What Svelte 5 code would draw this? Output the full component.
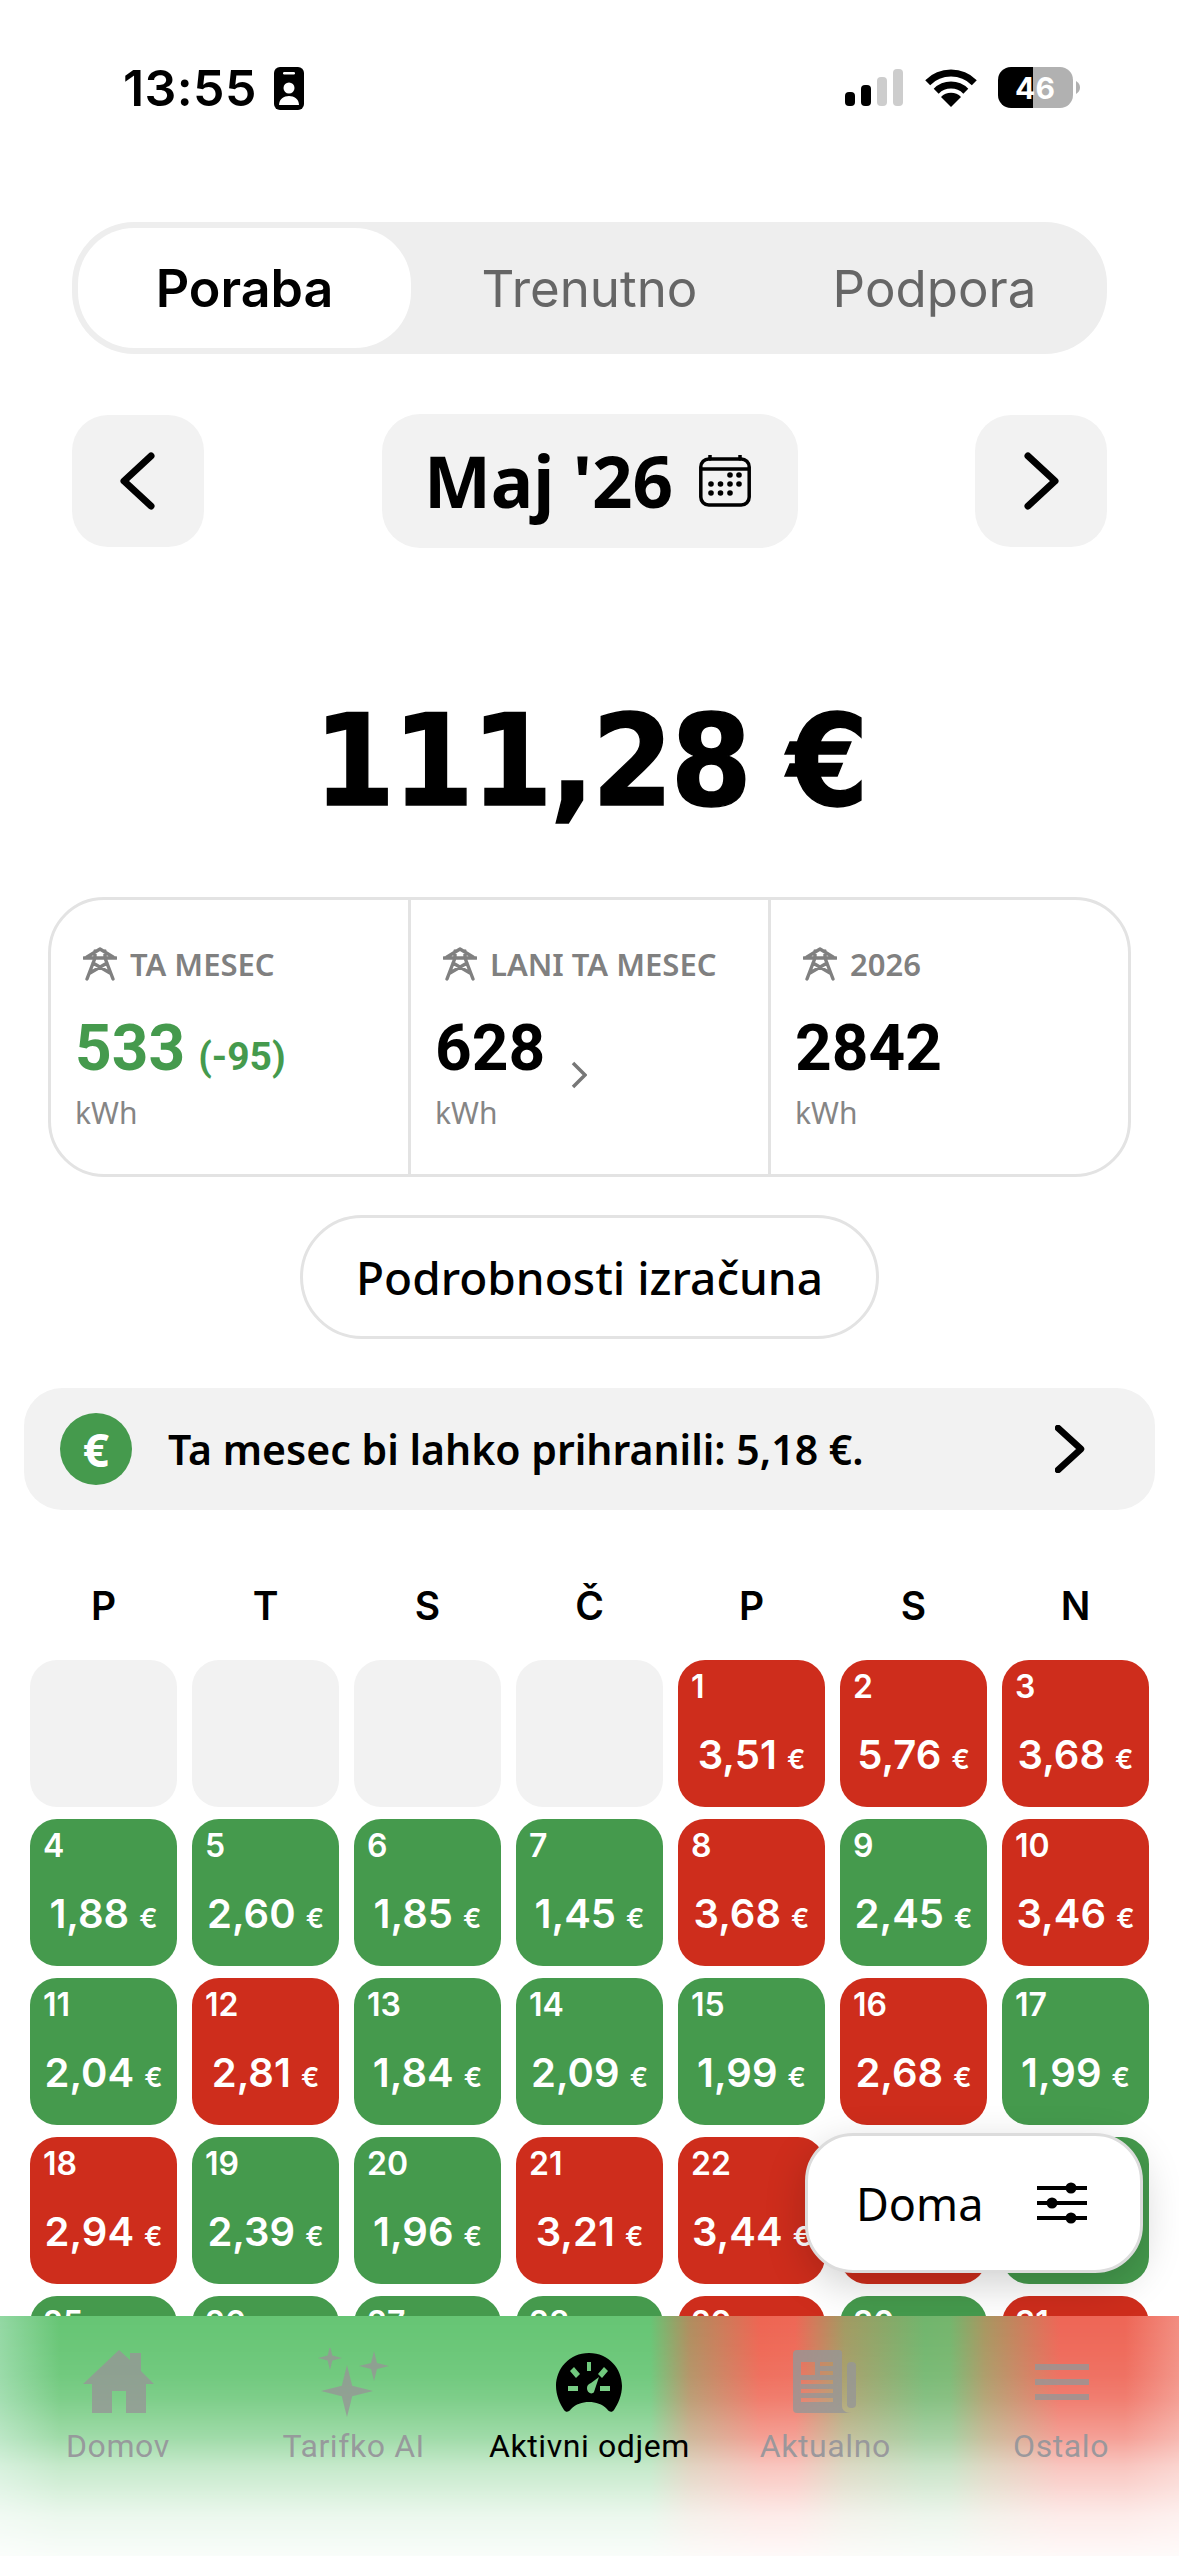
<script>
  const g = 'green', r = 'red';
  const cells = [
    null, null, null, null,
    [1,'3,51',r],[2,'5,76',r],[3,'3,68',r],
    [4,'1,88',g],[5,'2,60',g],[6,'1,85',g],[7,'1,45',g],[8,'3,68',r],[9,'2,45',g],[10,'3,46',r],
    [11,'2,04',g],[12,'2,81',r],[13,'1,84',g],[14,'2,09',g],[15,'1,99',g],[16,'2,68',r],[17,'1,99',g],
    [18,'2,94',r],[19,'2,39',g],[20,'1,96',g],[21,'3,21',r],[22,'3,44',r],['', '', r],['', '', g],
    [25,'',g],[26,'',g],[27,'',g],[28,'',g],[29,'',r],[30,'',g],[31,'',r]
  ];
  const days = ['P','T','S','Č','P','S','N'];
  const star = (cx, cy, s) => {
    const k = s * 0.2;
    return `M${cx} ${cy-s}L${cx+k} ${cy-k}L${cx+s} ${cy}L${cx+k} ${cy+k}L${cx} ${cy+s}L${cx-k} ${cy+k}L${cx-s} ${cy}L${cx-k} ${cy-k}Z`;
  };
</script>

{#snippet tower()}
  <svg class="tower" viewBox="0 0 34 34" fill="none" stroke="#808080" stroke-width="3.4" stroke-linecap="round" stroke-linejoin="round">
    <path d="M1 11H33M4 10L17 2L30 10M12 4V10M22 4V10M12 11L4 32M22 11L30 32M10 16L27 26M24 16L7 26"/>
  </svg>
{/snippet}

<div class="page">
  <div class="status">
    <div class="clock">
      <span class="time">13:55</span>
      <svg class="id" viewBox="0 0 30 43">
        <rect width="30" height="43" rx="6" fill="#000"/>
        <rect x="9" y="5" width="12" height="2.5" rx="1.2" fill="#fff"/>
        <circle cx="15" cy="21" r="5.5" fill="#fff"/>
        <path d="M5 38C5 32 10 29 15 29S25 32 25 38Z" fill="#fff"/>
      </svg>
    </div>
    <svg class="sys" viewBox="0 0 236 44">
      <rect x="0" y="26" width="10" height="14" rx="4" fill="#000"/>
      <rect x="16" y="19" width="10" height="21" rx="4" fill="#000"/>
      <rect x="32" y="11" width="10" height="29" rx="4" fill="#cdcdcd"/>
      <rect x="48" y="3" width="10" height="37" rx="4" fill="#cdcdcd"/>
      <path d="M82.7 16.7A33 33 0 0 1 129.3 16.7M91.2 25.2A21 21 0 0 1 120.8 25.2" fill="none" stroke="#000" stroke-width="7"/>
      <path d="M106 41L96 31A14 14 0 0 1 116 31Z" fill="#000"/>
      <path d="M188 1H166A13 13 0 0 0 153 14V29A13 13 0 0 0 166 42H188Z" fill="#000"/>
      <path d="M188 1H215A13 13 0 0 1 228 14V29A13 13 0 0 1 215 42H188Z" fill="#b1b1b1"/>
      <path d="M231 15C234 17 235 19 235 21.5S234 26 231 28Z" fill="#b1b1b1"/>
      <text class="batt" x="190" y="33" text-anchor="middle">46</text>
    </svg>
  </div>

  <div class="seg">
    <div class="seg-item active"><span>Poraba</span></div>
    <div class="seg-item">Trenutno</div>
    <div class="seg-item">Podpora</div>
  </div>

  <div class="nav">
    <div class="square">
      <svg viewBox="0 0 132 132" class="chev"><path d="M79 41L52 66L79 91"/></svg>
    </div>
    <div class="month">
      <span>Maj '26</span>
      <svg class="cal" viewBox="0 0 52 52" fill="none" stroke="#000" stroke-width="3.5">
        <rect x="1.8" y="4" width="48.4" height="46" rx="8"/>
        <path d="M2 14H50" />
        <path d="M11 0V4M41 0V4" stroke-linecap="round"/>
        <g fill="#000" stroke="none">
          <circle cx="31" cy="20" r="2.8"/><circle cx="40" cy="20" r="2.8"/>
          <circle cx="12" cy="29" r="2.8"/><circle cx="21.500" cy="29" r="2.8"/><circle cx="31" cy="29" r="2.8"/><circle cx="40" cy="29" r="2.8"/>
          <circle cx="12" cy="38" r="2.8"/><circle cx="21.500" cy="38" r="2.8"/><circle cx="31" cy="38" r="2.8"/>
        </g>
      </svg>
    </div>
    <div class="square">
      <svg viewBox="0 0 132 132" class="chev"><path d="M53 41L80 66L53 91"/></svg>
    </div>
  </div>

  <div class="total"><span>111,28 €</span></div>

  <div class="stats">
    <div class="stat">
      <div class="label">{@render tower()}<span>TA MESEC</span></div>
      <div class="val green-t">533<small>(-95)</small></div>
      <div class="unit">kWh</div>
    </div>
    <div class="stat">
      <div class="label">{@render tower()}<span>LANI TA MESEC</span></div>
      <div class="val">628</div>
      <div class="unit">kWh</div>
      <svg class="mini" viewBox="0 0 16 28"><path d="M2 2L14 14L2 26"/></svg>
    </div>
    <div class="stat">
      <div class="label">{@render tower()}<span>2026</span></div>
      <div class="val">2842</div>
      <div class="unit">kWh</div>
    </div>
  </div>

  <div class="detail">Podrobnosti izračuna</div>

  <div class="banner">
    <div class="coin">€</div>
    <div class="banner-text">Ta mesec bi lahko prihranili: 5,18 €.</div>
    <svg class="banner-chev" viewBox="0 0 30 48"><path d="M3 3L26 24L3 45"/></svg>
  </div>

  <div class="week">
    {#each days as d}<div>{d}</div>{/each}
  </div>

  <div class="grid">
    {#each cells as c}
      {#if c}
        <div class="cell {c[2]}">
          <div class="num">{c[0]}</div>
          {#if c[1]}<div class="amt">{c[1]} <small>€</small></div>{/if}
        </div>
      {:else}
        <div class="cell empty"></div>
      {/if}
    {/each}
  </div>

  <div class="float">
    <span>Doma</span>
    <svg class="sliders" viewBox="0 0 50 42">
      <path d="M0 6H50M0 21H50M0 36H50" stroke="#000" stroke-width="4"/>
      <circle cx="34" cy="6" r="5.500"/><circle cx="15" cy="21" r="5.500"/><circle cx="34" cy="36" r="5.500"/>
    </svg>
  </div>

  <div class="tabbar">
    <div class="tabglow"></div>
    <div class="tabs">
      <div class="tab">
        <svg viewBox="0 0 100 70"><path d="M51 2L62 12V5H73V23L86 36H78V65H58V43H44V65H24V36H15Z"/></svg>
        <span>Domov</span>
      </div>
      <div class="tab">
        <svg viewBox="0 0 100 70"><path d={star(43,43,26)}/><path d={star(26,10,12)}/><path d={star(70,18,15)}/></svg>
        <span>Tarifko AI</span>
      </div>
      <div class="tab on">
        <svg viewBox="0 0 100 70">
          <path fill-rule="evenodd" d="M50 5C70 5 83 21 83 38C83 47 79 56 75 62C73 65 70 64 68 61C63 56 57 54 50 54C43 54 37 56 32 61C30 64 27 65 25 62C21 56 17 47 17 38C17 21 30 5 50 5Z
            M48 14V23H52V14Z M29 38V43H39V38Z M61 38V43H71V38Z
            M35 19L31 23L37 30L41 26Z M65 19L69 23L63 30L59 26Z
            M60 29L55 44C53 47 48 45 48 40C48 37 50 36 52 35Z"/>
        </svg>
        <span>Aktivni odjem</span>
      </div>
      <div class="tab">
        <svg viewBox="0 0 100 70">
          <path fill-rule="evenodd" d="M22 2H64Q67 2 67 5V58C67 62 70 65 76 65H22Q18 65 18 61V6Q18 2 22 2Z
            M26 14V27H40V14Z M45 14V18H58V14Z M45 23V27H58V23Z M26 32V36H58V32Z M26 41V45H58V41Z M26 50V54H58V50Z"/>
          <rect x="72" y="14" width="9" height="46" rx="4"/>
        </svg>
        <span>Aktualno</span>
      </div>
      <div class="tab">
        <svg viewBox="0 0 100 70"><path d="M24 16H78V22H24ZM24 31H78V37H24ZM24 46H78V52H24Z"/></svg>
        <span>Ostalo</span>
      </div>
    </div>
  </div>
</div>

<style>
  :global(body) { margin: 0; background: #fff; }
  .page {
    position: relative;
    width: 1179px;
    height: 2556px;
    overflow: hidden;
    background: #fff;
    color: #000;
    font-family: Inter, "Liberation Sans", sans-serif;
  }
  .status {
    height: 222px;
    box-sizing: border-box;
    padding: 60px 98px 0 123px;
    display: flex;
    justify-content: space-between;
    align-items: flex-start;
  }
  .clock { display: flex; align-items: center; gap: 17px; }
  .time { font-size: 50px; font-weight: 600; line-height: 56px; letter-spacing: 0.4px; }
  .id { width: 30px; height: 43px; }
  .sys { width: 236px; height: 44px; margin-top: 6px; }
  .batt { font: 700 30px Inter, sans-serif; fill: #fff; }

  .seg {
    margin: 0 72px;
    height: 132px;
    background: #eeeeee;
    border-radius: 62px;
    display: grid;
    grid-template-columns: repeat(3, 1fr);
    align-items: center;
    text-align: center;
    font-size: 51px;
    color: #666;
  }
  .seg-item.active {
    height: 120px;
    margin: 0 6px;
    background: #fff;
    border-radius: 56px;
    color: #000;
    font-weight: 600;
    font-size: 52px;
    display: flex;
    align-items: center;
    justify-content: center;
  }

  .nav {
    margin-top: 60px;
    padding: 0 72px;
    display: flex;
    justify-content: space-between;
    align-items: center;
  }
  .square { width: 132px; height: 132px; background: #f2f2f2; border-radius: 36px; }
  .chev { display: block; width: 132px; height: 132px; fill: none; stroke: #000; stroke-width: 7; stroke-linecap: round; stroke-linejoin: round; }
  .month {
    width: 416px;
    height: 134px;
    background: #f2f2f2;
    border-radius: 38px;
    display: flex;
    align-items: center;
    justify-content: center;
    gap: 26px;
    padding-right: 4px;
    box-sizing: border-box;
    font-family: "Noto Sans", sans-serif;
    font-size: 71px;
    font-weight: 700;
    line-height: 130px;
  }
  .cal { width: 52px; height: 52px; }

  .total {
    margin-top: 139px;
    height: 150px;
    margin-bottom: -4px;
    display: flex;
    justify-content: center;
    align-items: center;
  }
  .total span {
    font-family: "DejaVu Sans", sans-serif;
    font-weight: 700;
    font-size: 126px;
    line-height: 150px;
    letter-spacing: -3px;
    white-space: nowrap;
    transform: scaleX(0.93);
    -webkit-text-stroke: 1.5px #000;
  }

  .stats {
    margin: 64px 48px 0;
    height: 280px;
    box-sizing: border-box;
    border: 3px solid #e3e3e3;
    border-radius: 56px;
    display: grid;
    grid-template-columns: 360px 360px 1fr;
  }
  .stat {
    position: relative;
    padding: 46px 0 0 24px;
    border-right: 3px solid #e3e3e3;
  }
  .stat:last-child { border-right: 0; }
  .label {
    display: flex;
    align-items: center;
    gap: 13px;
    padding-left: 8px;
    height: 36px;
    font-family: "Noto Sans", sans-serif;
    font-size: 31px;
    font-weight: 600;
    color: #808080;
  }
  .tower { width: 34px; height: 34px; flex: none; }
  .val {
    margin-top: 31px;
    height: 72px;
    line-height: 72px;
    font-family: Roboto, sans-serif;
    font-size: 64px;
    font-weight: 700;
  }
  .val small { font-size: 39px; font-weight: 700; margin-left: 13px; }
  .green-t { color: #459a4d; }
  .unit {
    margin-top: 9px;
    font-family: "Noto Sans", sans-serif;
    font-size: 30px;
    line-height: 38px;
    color: #858585;
  }
  .mini {
    position: absolute;
    left: 160px;
    top: 161px;
    width: 16px;
    height: 28px;
    fill: none;
    stroke: #777;
    stroke-width: 3.500;
  }

  .detail {
    margin: 38px auto 0;
    width: 579px;
    height: 124px;
    box-sizing: border-box;
    border: 3px solid #e3e3e3;
    border-radius: 62px;
    display: flex;
    align-items: center;
    justify-content: center;
    font-family: "Noto Sans", sans-serif;
    font-size: 46px;
    font-weight: 500;
  }

  .banner {
    margin: 49px 24px 0;
    height: 122px;
    background: #f2f2f2;
    border-radius: 38px;
    display: flex;
    align-items: center;
    padding: 0 70px 0 36px;
  }
  .coin {
    width: 72px;
    height: 72px;
    border-radius: 50%;
    background: #459a4d;
    color: #fff;
    font-family: "Noto Sans", sans-serif;
    font-size: 46px;
    font-weight: 700;
    display: flex;
    align-items: center;
    justify-content: center;
  }
  .banner-text {
    flex: 1;
    margin-left: 36px;
    font-family: "Noto Sans", sans-serif;
    font-size: 41px;
    font-weight: 600;
  }
  .banner-chev { width: 30px; height: 48px; fill: none; stroke: #000; stroke-width: 6.5; stroke-linecap: round; stroke-linejoin: round; }

  .week {
    height: 150px;
    box-sizing: border-box;
    padding: 72px 30px 0;
    display: grid;
    grid-template-columns: repeat(7, 147px);
    column-gap: 15px;
    text-align: center;
    font-size: 39px;
    font-weight: 600;
    line-height: 48px;
  }
  .grid {
    padding: 0 30px;
    display: grid;
    grid-template-columns: repeat(7, 147px);
    grid-auto-rows: 147px;
    gap: 12px 15px;
  }
  .cell {
    border-radius: 27px;
    box-sizing: border-box;
    padding: 8px 0 0 13px;
    color: #fff;
  }
  .cell.empty { background: #f2f2f2; }
  .cell.green { background: #459a4d; }
  .cell.red { background: #ce2d1c; }
  .num { font-size: 32px; font-weight: 600; line-height: 38px; min-height: 38px; }
  .amt {
    margin: 26px 0 0 -13px;
    text-align: center;
    font-size: 40px;
    font-weight: 600;
    line-height: 46px;
    white-space: nowrap;
  }
  .amt small { font-size: 27px; font-weight: 600; }

  .float {
    position: absolute;
    left: 805px;
    top: 2133px;
    width: 338px;
    height: 140px;
    box-sizing: border-box;
    padding: 0 53px 0 48px;
    background: #fff;
    border: 3px solid #dcdcdc;
    border-radius: 48px;
    box-shadow: 0 12px 40px rgba(0, 0, 0, 0.18);
    display: flex;
    align-items: center;
    justify-content: space-between;
    font-family: "Noto Sans", sans-serif;
    font-size: 45px;
  }
  .sliders { width: 50px; height: 42px; }

  .tabbar {
    position: absolute;
    left: 0;
    right: 0;
    bottom: 0;
    height: 240px;
    background: #fff;
  }
  .tabglow {
    position: absolute;
    inset: 0;
    background: linear-gradient(to right,
      #93d8a3 0, #66c574 60px, #66c574 650px, #b08d5e 690px, #ee6552 760px, #ee6755 795px,
      #a29a62 845px, #70b56c 925px, #74b56c 950px, #a89660 985px, #ee6656 1060px, #ee6656 1125px, #f28d80 1179px);
    -webkit-mask-image: linear-gradient(to bottom, #000 0, rgba(0,0,0,.97) 30px, rgba(0,0,0,.92) 60px, rgba(0,0,0,.84) 84px, rgba(0,0,0,.62) 122px, rgba(0,0,0,.38) 150px, rgba(0,0,0,.13) 200px, rgba(0,0,0,.04) 240px);
    mask-image: linear-gradient(to bottom, #000 0, rgba(0,0,0,.97) 30px, rgba(0,0,0,.92) 60px, rgba(0,0,0,.84) 84px, rgba(0,0,0,.62) 122px, rgba(0,0,0,.38) 150px, rgba(0,0,0,.13) 200px, rgba(0,0,0,.04) 240px);
  }
  .tabs {
    position: relative;
    display: grid;
    grid-template-columns: repeat(5, 1fr);
    padding-top: 32px;
    text-align: center;
  }
  .tab { display: flex; flex-direction: column; align-items: center; color: rgba(150, 150, 155, 0.95); }
  .tab svg { width: 100px; height: 70px; fill: rgba(150, 150, 150, 0.8); }
  .tab span { margin-top: 8px; font-family: Roboto, sans-serif; font-size: 32px; line-height: 40px; letter-spacing: 0.6px; white-space: nowrap; }
  .tab.on { color: #000; }
  .tab.on svg { fill: #000; }
</style>
